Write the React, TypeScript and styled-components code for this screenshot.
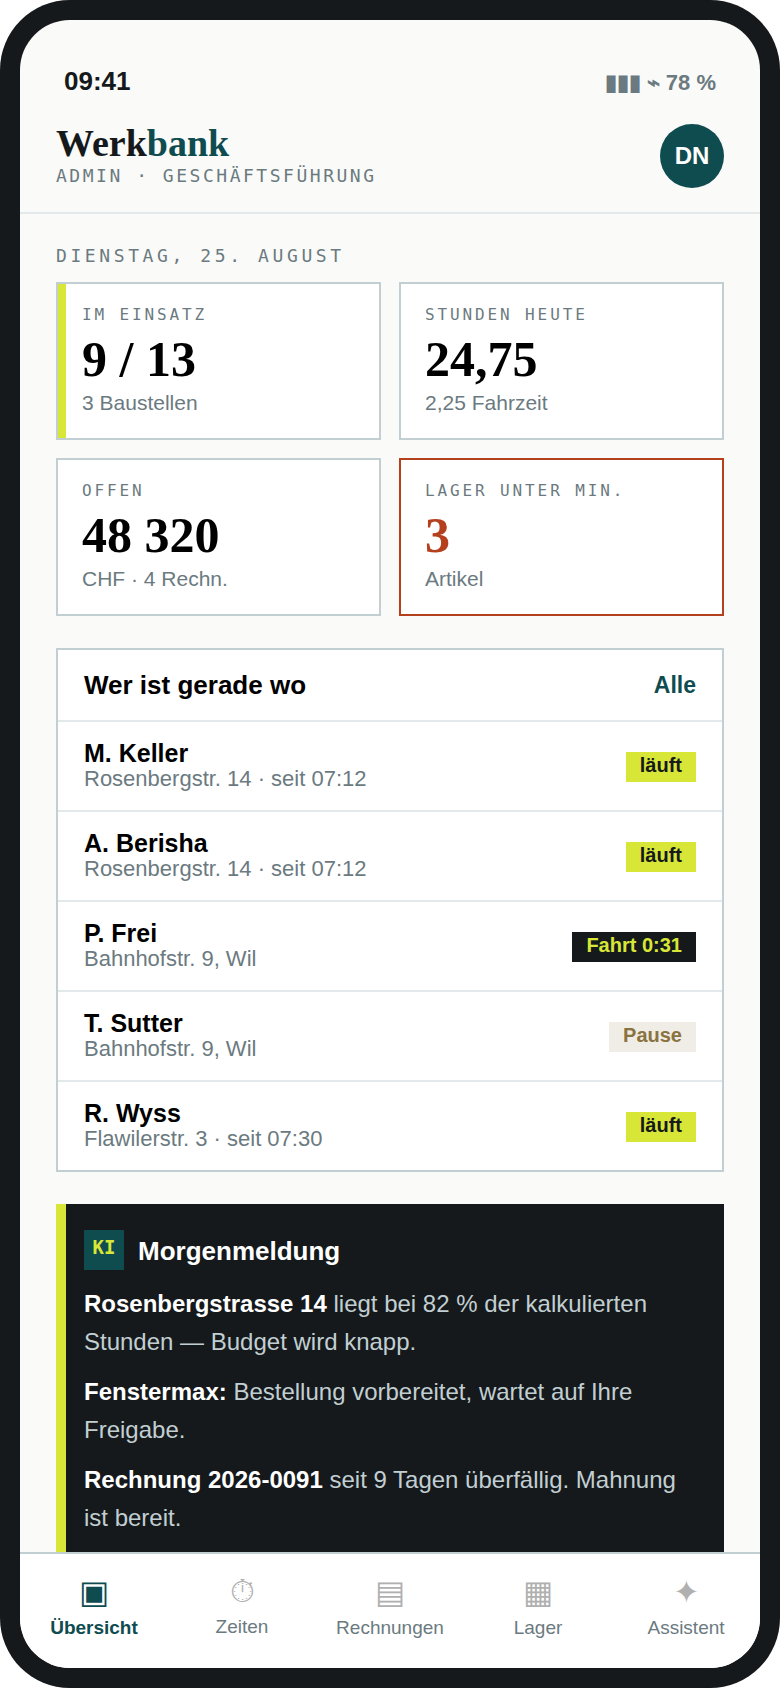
import * as React from "react";
import styled, { createGlobalStyle } from "styled-components";

const GlobalStyle = createGlobalStyle`
  html, body {
    margin: 0;
    padding: 0;
    background: #ffffff;
  }
  * {
    box-sizing: border-box;
  }
`;

const SANS = `"Liberation Sans", Arial, sans-serif`;
const SERIF = `"Liberation Serif", "Times New Roman", serif`;
const MONO = `"DejaVu Sans Mono", "Liberation Mono", monospace`;

const Phone = styled.div`
  width: 780px;
  height: 1688px;
  padding: 20px;
  background: #15191c;
  border-radius: 70px;
  font-family: ${SANS};
`;

const Screen = styled.div`
  width: 740px;
  height: 1648px;
  display: flex;
  flex-direction: column;
  overflow: hidden;
  background: #fafaf8;
  border-radius: 50px;
`;

const StatusBar = styled.div`
  display: flex;
  justify-content: space-between;
  align-items: center;
  height: 46px;
  margin-top: 38px;
  padding: 0 44px;
`;

const Clock = styled.span`
  font-size: 26px;
  font-weight: 700;
  color: #15191c;
`;

const Battery = styled.span`
  margin-top: 3px;
  font-size: 22px;
  font-weight: 700;
  color: #6b7a80;
`;

const Header = styled.header`
  display: flex;
  justify-content: space-between;
  align-items: flex-start;
  padding: 17px 36px 24px;
  border-bottom: 2px solid #e3e8ea;
`;

const Brand = styled.div`
  display: flex;
  flex-direction: column;
`;

const Logo = styled.div`
  font-family: ${SERIF};
  font-size: 38px;
  line-height: 44px;
  font-weight: 700;
  color: #15191c;
`;

const LogoAccent = styled.span`
  color: #0f4c50;
`;

const Role = styled.div`
  font-family: ${MONO};
  font-size: 18px;
  line-height: 22px;
  letter-spacing: 2.52px;
  color: #6b7a80;
`;

const Avatar = styled.div`
  width: 64px;
  height: 64px;
  margin-top: 3px;
  display: flex;
  align-items: center;
  justify-content: center;
  border-radius: 50%;
  background: #0f4c50;
  color: #ffffff;
  font-size: 24px;
  font-weight: 700;
`;

const Main = styled.main`
  flex: 1;
  min-height: 0;
  overflow: hidden;
  padding: 31px 36px 0;
`;

const DateLine = styled.div`
  font-family: ${MONO};
  font-size: 18px;
  line-height: 22px;
  letter-spacing: 3.6px;
  color: #6b7a80;
  margin-bottom: 15px;
`;

const Kpis = styled.div`
  display: grid;
  grid-template-columns: 1fr 1fr;
  gap: 18px;
  margin-bottom: 32px;
`;

const Kpi = styled.div<{ $accent?: boolean; $alert?: boolean }>`
  height: 158px;
  padding: 21px 24px 0;
  background: #ffffff;
  border: 2px solid ${(p) => (p.$alert ? "#b5401d" : "#c2cfd2")};
  box-shadow: ${(p) => (p.$accent ? "inset 8px 0 0 #d8e637" : "none")};
`;

const KpiLabel = styled.div`
  font-family: ${MONO};
  font-size: 16px;
  line-height: 20px;
  letter-spacing: 2.88px;
  color: #6b7a80;
`;

const KpiValue = styled.div<{ $alert?: boolean }>`
  font-family: ${SERIF};
  font-size: 50px;
  line-height: 60px;
  margin-top: 4px;
  font-weight: 700;
  color: ${(p) => (p.$alert ? "#b5401d" : "#000000")};
`;

const KpiSub = styled.div`
  font-size: 21px;
  line-height: 26px;
  margin-top: 1px;
  color: #6b7a80;
`;

const Panel = styled.section`
  background: #ffffff;
  border: 2px solid #c2cfd2;
  margin-bottom: 32px;
`;

const PanelHead = styled.div`
  display: flex;
  justify-content: space-between;
  align-items: center;
  height: 72px;
  padding: 0 26px;
  border-bottom: 2px solid #e3e8ea;
`;

const PanelTitle = styled.div`
  font-size: 26px;
  font-weight: 700;
  color: #000000;
`;

const PanelLink = styled.div`
  font-size: 23px;
  font-weight: 700;
  color: #0f4c50;
`;

const Row = styled.div`
  display: flex;
  justify-content: space-between;
  align-items: center;
  height: 90px;
  padding: 0 26px;
  border-bottom: 2px solid #e3e8ea;

  &:last-child {
    height: 88px;
    border-bottom: 0;
  }
`;

const Person = styled.div`
  display: flex;
  flex-direction: column;
  padding-bottom: 1px;
`;

const Name = styled.div`
  font-size: 25px;
  line-height: 27px;
  font-weight: 700;
  color: #000000;
`;

const Place = styled.div`
  font-size: 22px;
  line-height: 24px;
  color: #6b7a80;
`;

const Pill = styled.span<{ $kind: "run" | "drive" | "pause" }>`
  height: 30px;
  margin-top: 2px;
  display: flex;
  align-items: center;
  padding: 0 14px 4px;
  font-size: 20px;
  font-weight: 700;
  background: ${(p) =>
    p.$kind === "run" ? "#d8e637" : p.$kind === "drive" ? "#15191c" : "#f0ede6"};
  color: ${(p) =>
    p.$kind === "run" ? "#15191c" : p.$kind === "drive" ? "#d8e637" : "#8a7340"};
`;

const Briefing = styled.section`
  padding: 26px 26px 0 28px;
  background: #15191c;
  box-shadow: inset 10px 0 0 #d8e637;
  color: #c2cfd2;
  height: 400px;
`;

const BriefingHead = styled.div`
  display: flex;
  align-items: center;
  gap: 14px;
  margin-bottom: 15px;
`;

const KiTag = styled.div`
  width: 40px;
  height: 40px;
  padding-bottom: 6px;
  display: flex;
  align-items: center;
  justify-content: center;
  background: #0f4c50;
  color: #d8e637;
  font-family: ${MONO};
  font-size: 19px;
  font-weight: 700;
`;

const BriefingTitle = styled.div`
  margin-top: 2px;
  font-size: 26px;
  font-weight: 700;
  color: #ffffff;
`;

const Para = styled.p`
  margin: 0 0 12px;
  font-size: 24px;
  line-height: 38px;

  strong {
    color: #ffffff;
  }
`;

const TabBar = styled.nav`
  flex: none;
  height: 116px;
  display: flex;
  background: #ffffff;
  border-top: 2px solid #c2cfd2;
`;

const Tab = styled.div<{ $active?: boolean }>`
  flex: 1;
  display: flex;
  flex-direction: column;
  align-items: center;
  padding-top: 19px;
  gap: 6px;
  font-size: 19px;
  font-weight: ${(p) => (p.$active ? 700 : 400)};
  color: ${(p) => (p.$active ? "#0f4c50" : "#6b7a80")};
`;

const TabIcon = styled.span<{ $active?: boolean }>`
  font-size: 32px;
  font-weight: 400;
  color: ${(p) => (p.$active ? "#0f4c50" : "#b0b0b0")};
`;

const people = [
  { name: "M. Keller", place: "Rosenbergstr. 14 · seit 07:12", kind: "run", status: "läuft" },
  { name: "A. Berisha", place: "Rosenbergstr. 14 · seit 07:12", kind: "run", status: "läuft" },
  { name: "P. Frei", place: "Bahnhofstr. 9, Wil", kind: "drive", status: "Fahrt 0:31" },
  { name: "T. Sutter", place: "Bahnhofstr. 9, Wil", kind: "pause", status: "Pause" },
  { name: "R. Wyss", place: "Flawilerstr. 3 · seit 07:30", kind: "run", status: "läuft" },
] as const;

const tabs = [
  { icon: "▣", label: "Übersicht", active: true },
  { icon: "⏱", label: "Zeiten" },
  { icon: "▤", label: "Rechnungen" },
  { icon: "▦", label: "Lager" },
  { icon: "✦", label: "Assistent" },
];

export default function App() {
  return (
    <Phone>
      <GlobalStyle />
      <Screen>
        <StatusBar>
          <Clock>09:41</Clock>
          <Battery>▮▮▮ ⌁ 78 %</Battery>
        </StatusBar>
        <Header>
          <Brand>
            <Logo>
              Werk<LogoAccent>bank</LogoAccent>
            </Logo>
            <Role>ADMIN · GESCHÄFTSFÜHRUNG</Role>
          </Brand>
          <Avatar>DN</Avatar>
        </Header>
        <Main>
          <DateLine>DIENSTAG, 25. AUGUST</DateLine>
          <Kpis>
            <Kpi $accent>
              <KpiLabel>IM EINSATZ</KpiLabel>
              <KpiValue>9 / 13</KpiValue>
              <KpiSub>3 Baustellen</KpiSub>
            </Kpi>
            <Kpi>
              <KpiLabel>STUNDEN HEUTE</KpiLabel>
              <KpiValue>24,75</KpiValue>
              <KpiSub>2,25 Fahrzeit</KpiSub>
            </Kpi>
            <Kpi>
              <KpiLabel>OFFEN</KpiLabel>
              <KpiValue>48 320</KpiValue>
              <KpiSub>CHF · 4 Rechn.</KpiSub>
            </Kpi>
            <Kpi $alert>
              <KpiLabel>LAGER UNTER MIN.</KpiLabel>
              <KpiValue $alert>3</KpiValue>
              <KpiSub>Artikel</KpiSub>
            </Kpi>
          </Kpis>
          <Panel>
            <PanelHead>
              <PanelTitle>Wer ist gerade wo</PanelTitle>
              <PanelLink>Alle</PanelLink>
            </PanelHead>
            {people.map((p) => (
              <Row key={p.name}>
                <Person>
                  <Name>{p.name}</Name>
                  <Place>{p.place}</Place>
                </Person>
                <Pill $kind={p.kind}>{p.status}</Pill>
              </Row>
            ))}
          </Panel>
          <Briefing>
            <BriefingHead>
              <KiTag>KI</KiTag>
              <BriefingTitle>Morgenmeldung</BriefingTitle>
            </BriefingHead>
            <Para>
              <strong>Rosenbergstrasse 14</strong> liegt bei 82 % der kalkulierten Stunden — Budget wird knapp.
            </Para>
            <Para>
              <strong>Fenstermax:</strong> Bestellung vorbereitet, wartet auf Ihre Freigabe.
            </Para>
            <Para>
              <strong>Rechnung 2026-0091</strong> seit 9 Tagen überfällig. Mahnung ist bereit.
            </Para>
          </Briefing>
        </Main>
        <TabBar>
          {tabs.map((t) => (
            <Tab key={t.label} $active={t.active}>
              <TabIcon $active={t.active}>{t.icon}</TabIcon>
              {t.label}
            </Tab>
          ))}
        </TabBar>
      </Screen>
    </Phone>
  );
}
